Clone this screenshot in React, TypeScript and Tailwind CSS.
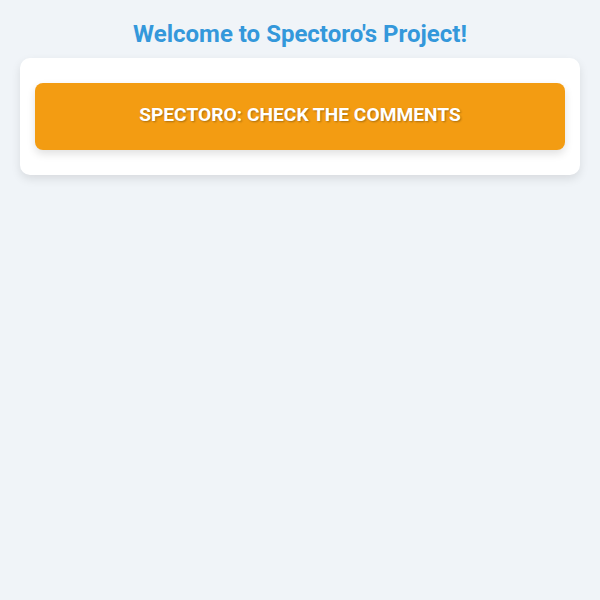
export default function App() {
  return (
    <div className="min-h-screen bg-[#f0f4f8] px-5 pt-5 font-['Roboto',sans-serif]">
      <h1 className="mb-[9px] text-center text-2xl leading-[29px] font-bold text-[#3498db]">
        Welcome to Spectoro's Project!
      </h1>
      <div className="rounded-[10px] bg-white px-[15px] py-[25px] shadow-[0_4px_10px_rgba(0,0,0,0.1)]">
        <button
          type="button"
          className="block w-full rounded-lg bg-[#f39c12] pt-[18px] pb-[22px] text-[19.2px] leading-[27px] font-bold text-white uppercase shadow-[0_4px_8px_rgba(0,0,0,0.12)] [text-shadow:1px_1px_2px_rgba(0,0,0,0.3)]"
        >
          Spectoro: Check the comments
        </button>
      </div>
    </div>
  );
}
